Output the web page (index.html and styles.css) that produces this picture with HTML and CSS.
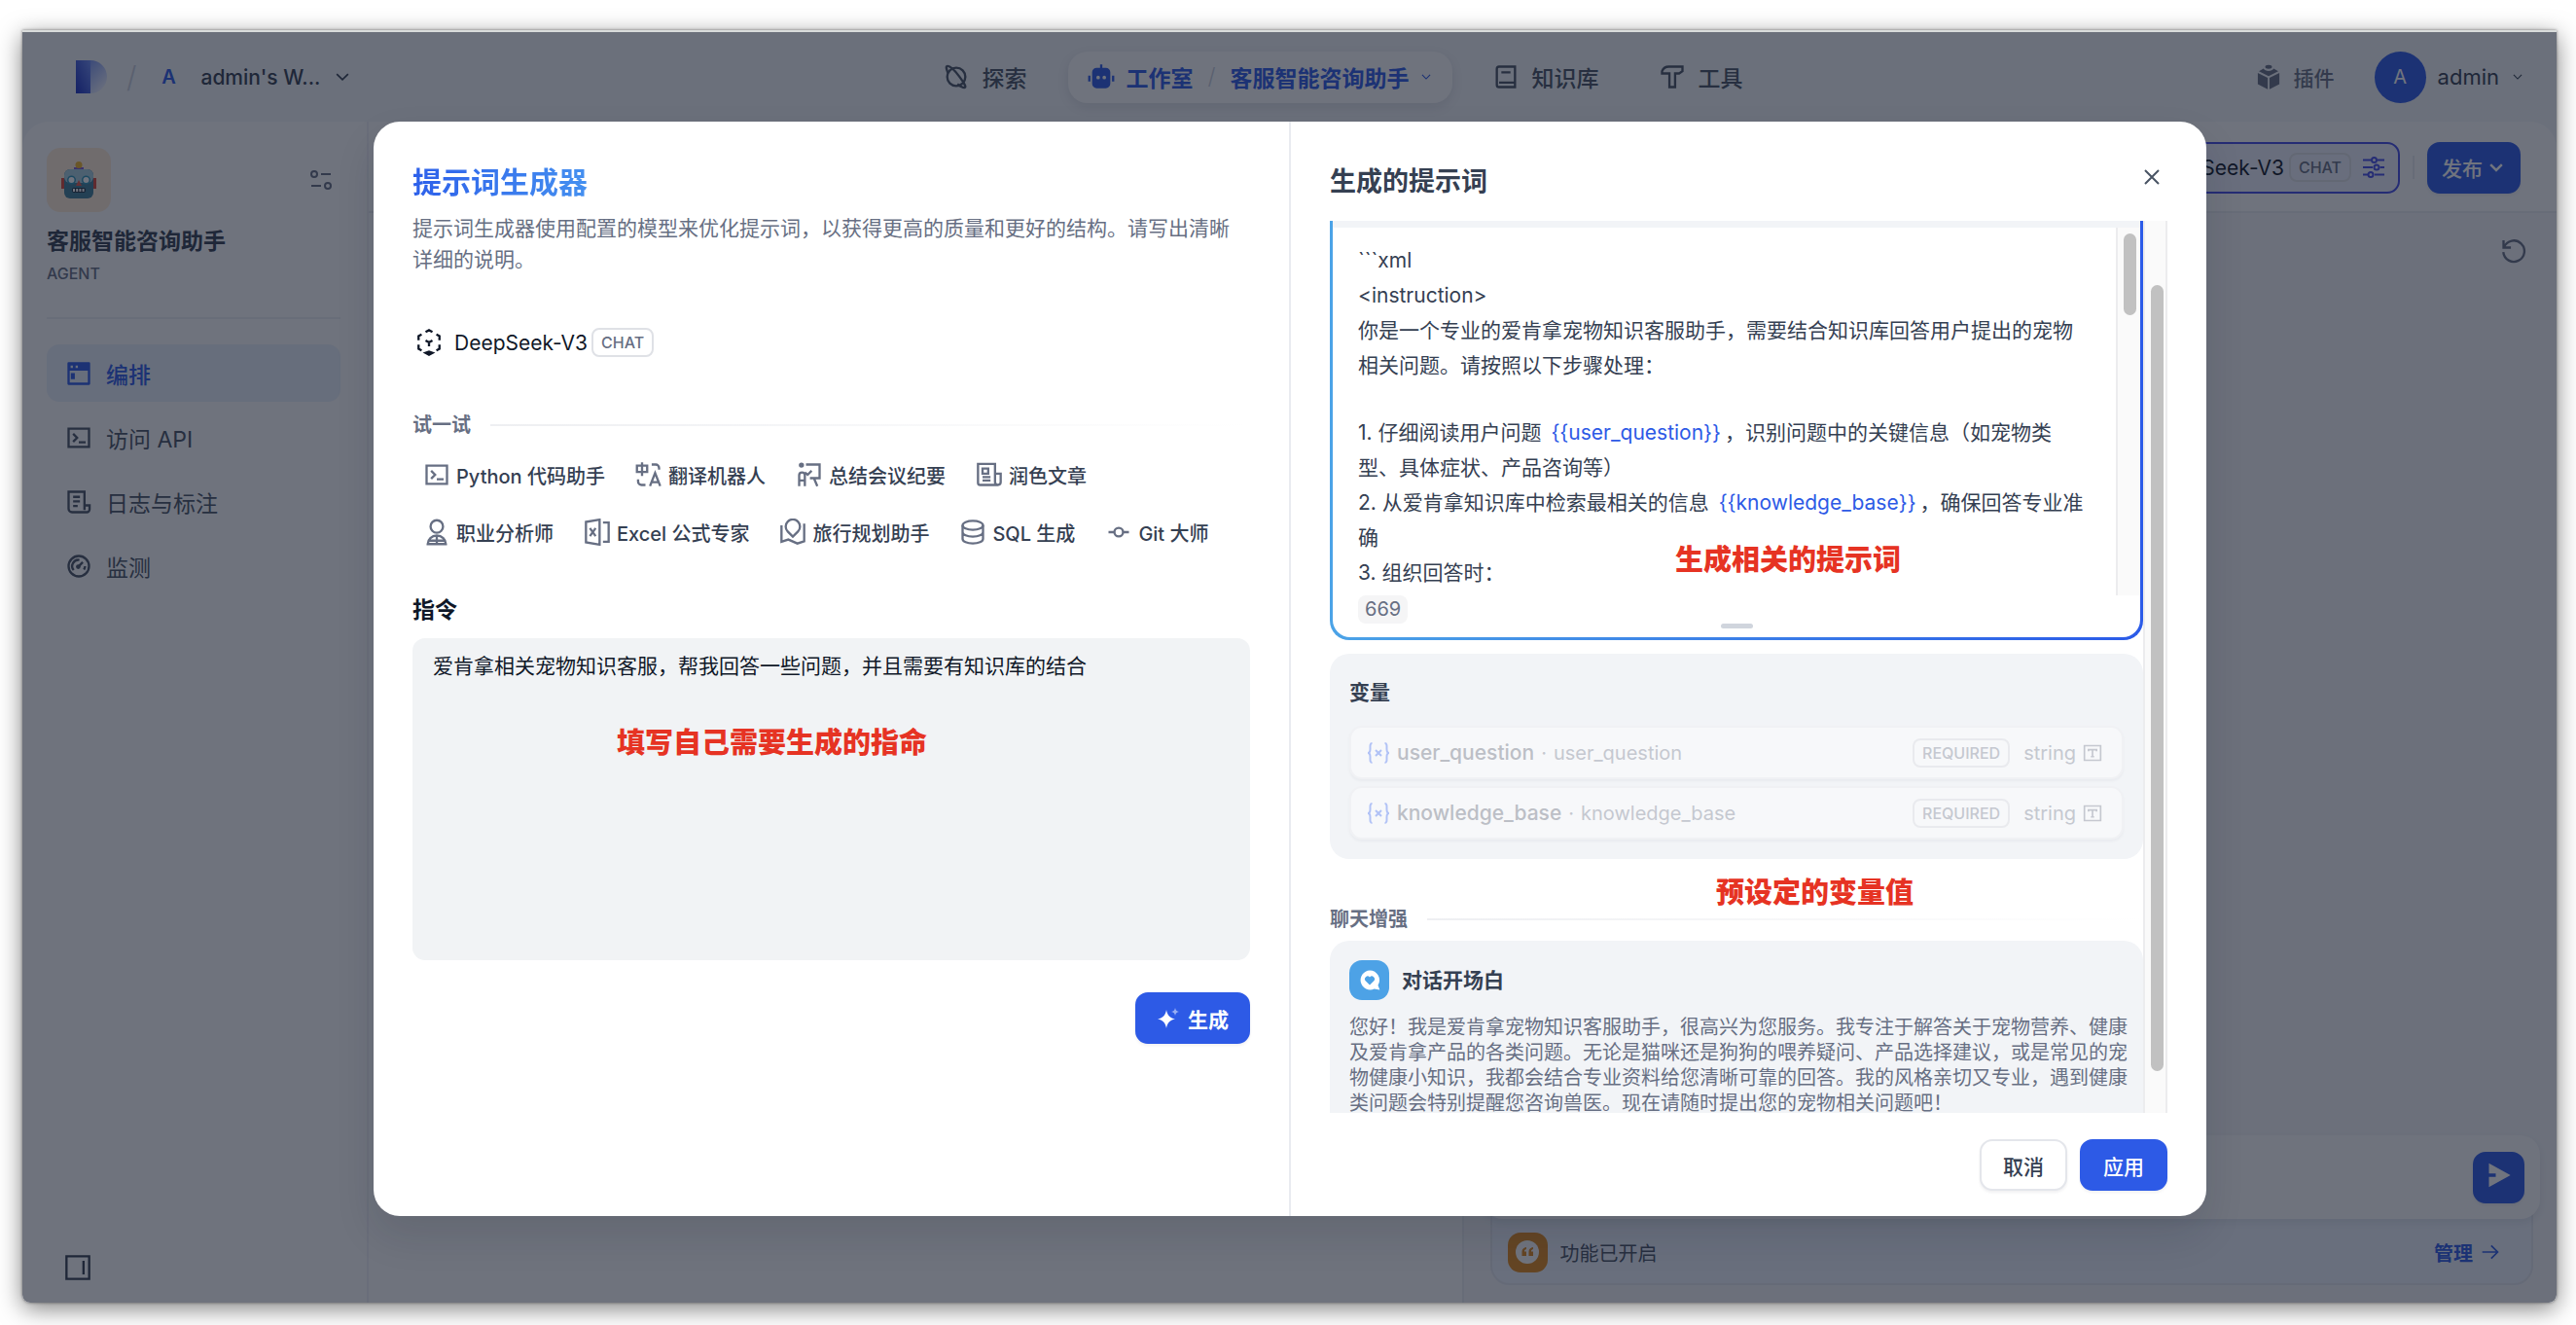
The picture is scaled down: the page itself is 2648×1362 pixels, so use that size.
FILE: index.html
```html
<!DOCTYPE html>
<html lang="zh-CN">
<head>
  <meta charset="UTF-8" />
  <meta name="viewport" content="width=device-width, initial-scale=1.0"/>
  <title>客服智能咨询助手</title>
  <link rel="stylesheet" href="styles.css">
</head>
<body>
  <svg class="sprite" aria-hidden="true">
    <symbol id="i-down" viewBox="0 0 24 24"><path d="M5 8.5l7 7 7-7"/></symbol>
    <symbol id="i-planet" viewBox="0 0 24 24"><circle cx="12" cy="12" r="8"/><path d="M4.6 8.4C3.2 5 2.8 2.8 3.9 2.6 6 2 10.500 6.200 14.500 11.500c4.100 5.500 6.500 9.300 5.100 9.900-1.400.5-4.200-1.200-6.600-3"/></symbol>
    <symbol id="i-robot" viewBox="0 0 24 24"><path class="solid" fill-rule="evenodd" d="M11 1h2v3h3a4 4 0 0 1 4 4v10a4 4 0 0 1-4 4H8a4 4 0 0 1-4-4V8a4 4 0 0 1 4-4h3zM9.300 11a1.600 1.600 0 1 0 0 3.200 1.600 1.600 0 0 0 0-3.200zm5.400 0a1.600 1.600 0 1 0 0 3.200 1.600 1.600 0 0 0 0-3.200zM.5 11h2v5h-2zm21 0h2v5h-2z"/></symbol>
    <symbol id="i-book" viewBox="0 0 24 24"><path d="M20 17V3H6a2 2 0 0 0-2 2v14a2 2 0 0 0 2 2h14v-4H6M8 8h8"/></symbol>
    <symbol id="i-hammer" viewBox="0 0 24 24"><path d="M21 3H9C6 3 4 4.500 3 7v2h6.500v12h5V9H18l3-2z"/></symbol>
    <symbol id="i-plugin" viewBox="0 0 24 24"><path class="solid" d="M12 1.500c2 0 3 .8 3 1.800s-1 1.700-3 1.700-3-.7-3-1.700 1-1.800 3-1.800zM2.500 8.500l8.700 4.300V23l-8.700-4.500zM21.500 8.500V18.500L12.800 23V12.800zM3.500 7l4-2.200c.8 1.300 2.400 2 4.500 2s3.700-.7 4.500-2l4 2.200L12 11.300z"/></symbol>
    <symbol id="i-toggle" viewBox="0 0 24 24"><circle cx="5" cy="6" r="3"/><circle cx="19" cy="18" r="3"/><path d="M12 6h10M2 18h10"/></symbol>
    <symbol id="i-window" viewBox="0 0 24 24"><path class="solid" fill-rule="evenodd" d="M3 2h18a1 1 0 0 1 1 1v18a1 1 0 0 1-1 1H3a1 1 0 0 1-1-1V3a1 1 0 0 1 1-1zM4 9.500V20h16V9.500zM4.800 5v2h2V5zm4.400 0v2h2V5zM5 11.500h3.500V17H5z"/></symbol>
    <symbol id="i-terminal" viewBox="0 0 24 24"><path d="M3 4h18v16H3zM7 8.500l3.500 3.500L7 15.500M12 16h6"/></symbol>
    <symbol id="i-log" viewBox="0 0 24 24"><path d="M17 15V3H3v15a3 3 0 0 0 3 3h13a2.500 2.500 0 0 0 2.500-2.500V15H17v4M7 7.500h6M7 11.500h6M7 15.500h4"/></symbol>
    <symbol id="i-gauge" viewBox="0 0 24 24"><circle cx="12" cy="12" r="9"/><path d="M11 13l4.500-4.500M7.500 15.500a5.500 5.500 0 0 1 5-9M16.500 15a5.500 5.500 0 0 0 1-3"/><circle class="solid" cx="11.500" cy="12.500" r="2"/></symbol>
    <symbol id="i-layout" viewBox="0 0 24 24"><path d="M2 2h20v20H2zM17 6v12"/></symbol>
    <symbol id="i-close" viewBox="0 0 24 24"><path d="M5 5l14 14M19 5L5 19"/></symbol>
    <symbol id="i-sliders" viewBox="0 0 24 24"><path d="M1 4.500h8M16 4.500h7M1 12h10M18.500 12H23M1 19.500h5M13 19.500h10"/><circle cx="12.500" cy="4.500" r="2.500"/><circle cx="15" cy="12" r="2.500"/><circle cx="9" cy="19.500" r="2.500"/></symbol>
    <symbol id="i-refresh" viewBox="0 0 24 24"><path d="M3 2.500V9h6.500M3.500 8.500A9.300 9.300 0 1 1 2.800 13"/></symbol>
    <symbol id="i-send" viewBox="0 0 24 24"><path class="solid" d="M3 1.500L22 12 3 22.500v-9h6v-3H3z"/></symbol>
    <symbol id="i-arrow" viewBox="0 0 24 24"><path d="M2 12h19M13 4l8 8-8 8"/></symbol>
    <symbol id="i-model" viewBox="0 0 24 24"><path d="M9 2.800L12 1.200l3 1.600M18.500 5l2.700 1.400V10M21.200 14v3.600L18.500 19M5.500 5L2.800 6.400V10M2.800 14v3.600L5.500 19M9 21.200l3 1.600 3-1.600-3-1zM9 10.200l3 1.800 3-1.800M12 12v3.500"/></symbol>
    <symbol id="i-translate" viewBox="0 0 24 24"><path d="M6 1v12M1.500 4h9v5.500h-9zM14.500 3H18a3 3 0 0 1 3 3v1.500M2.500 16v2a3 3 0 0 0 3 3H9M13 22l4.500-11.500L22 22M14.500 18.500h6"/></symbol>
    <symbol id="i-meeting" viewBox="0 0 24 24"><circle class="solid" cx="5" cy="3.500" r="2.300"/><path d="M9 3h12v12H12.500M3 22v-9.500a2.500 2.500 0 0 1 5 0V22M3 17h5M8 10l2.500 2L14 8.500M16 15l3 7"/></symbol>
    <symbol id="i-article" viewBox="0 0 24 24"><path d="M17 21H4a2 2 0 0 1-2-2V2.500h15V18.500a2.500 2.500 0 0 0 5 0V11h-5M17 21h3M6 6.500h5v4.500H6zM6 14h7M6 17h7"/></symbol>
    <symbol id="i-user" viewBox="0 0 24 24"><circle cx="12" cy="7" r="5.500"/><path d="M4 22.500a8 7.500 0 0 1 16 0zM12 15.500v7M4.500 19.500h15"/></symbol>
    <symbol id="i-excel" viewBox="0 0 24 24"><path d="M2 3l12-2v22L2 21zM17 3.500h5v17h-5M5.500 8.500l5 7M10.500 8.500l-5 7"/></symbol>
    <symbol id="i-map" viewBox="0 0 24 24"><path d="M12 16l-4.500-4.500a6.300 6.300 0 1 1 9 0zM2 6v14.500l6-2 8 3.500 6-2V4.500"/></symbol>
    <symbol id="i-database" viewBox="0 0 24 24"><ellipse cx="12" cy="6" rx="9" ry="4"/><path d="M3 6v12c0 2.200 4 4 9 4s9-1.800 9-4V6M3 12c0 2.200 4 4 9 4s9-1.800 9-4"/></symbol>
    <symbol id="i-commit" viewBox="0 0 24 24"><circle cx="12" cy="12" r="3.800"/><path d="M3 12h5M16 12h5"/></symbol>
    <symbol id="i-spark" viewBox="0 0 24 24"><path class="solid" d="M10 3c1 5.500 3 8 9 9.500-6 1.500-8 4-9 9.500-1-5.500-3-8-9-9.500 6-1.500 8-4 9-9.500z"/><path class="solid faint" d="M19 1c.5 2.500 1.500 3.500 4 4-2.500.5-3.500 1.500-4 4-.5-2.500-1.500-3.500-4-4 2.500-.5 3.500-1.500 4-4z"/></symbol>
    <symbol id="i-var" viewBox="0 0 24 24"><path d="M5.500 2C3 2 3.500 5 3.500 8 3.500 10 3 12 1 12c2 0 2.500 2 2.500 4 0 3-.5 6 2 6M18.500 2c2.500 0 2 3 2 6 0 2 .5 4 2.500 4-2 0-2.500 2-2.500 4 0 3 .5 6-2 6M9 9l6 6M15 9l-6 6"/></symbol>
    <symbol id="i-text" viewBox="0 0 24 24"><path d="M2 3h20v18H2zM7 10V8h10v2M12 8v8.500M10 16.500h4"/></symbol>
  </svg>

  <div class="window">
    <header class="header">
      <div class="workspace">
        <svg class="logo" viewBox="0 0 32 34" aria-hidden="true">
          <defs>
            <linearGradient id="logo-a" x1="0" y1="1" x2="1" y2="0"><stop offset="0" stop-color="#1a2fc0"/><stop offset="1" stop-color="#6e8cf5"/></linearGradient>
            <linearGradient id="logo-b" x1="0" y1="0" x2="1" y2="1"><stop offset="0" stop-color="#5578ee"/><stop offset="1" stop-color="#ffffff"/></linearGradient>
          </defs>
          <path fill="url(#logo-b)" d="M0 0h15a17 17 0 0 1 0 34z"/>
          <path fill="url(#logo-a)" d="M0 0h15v34H0z"/>
        </svg>
        <span class="slash">/</span>
        <span class="ws-badge">A</span>
        <button class="ws-name">admin's W... <svg class="icon sm"><use href="#i-down"/></svg></button>
      </div>
      <nav class="nav">
        <a href="#" class="nav-item"><svg class="icon"><use href="#i-planet"/></svg>探索</a>
        <div class="nav-pill">
          <a href="#"><svg class="icon lg"><use href="#i-robot"/></svg>工作室</a>
          <span class="slash">/</span>
          <a href="#">客服智能咨询助手 <svg class="icon xs"><use href="#i-down"/></svg></a>
        </div>
        <a href="#" class="nav-item"><svg class="icon"><use href="#i-book"/></svg>知识库</a>
        <a href="#" class="nav-item"><svg class="icon"><use href="#i-hammer"/></svg>工具</a>
      </nav>
      <div class="account">
        <a href="#" class="plugins"><svg class="icon"><use href="#i-plugin"/></svg>插件</a>
        <button class="user"><span class="avatar">A</span>admin <svg class="icon xs"><use href="#i-down"/></svg></button>
      </div>
    </header>

    <div class="main">
      <aside class="sidebar">
        <div class="app-head">
          <span class="app-icon">
            <svg viewBox="0 0 36 38" aria-hidden="true">
              <path fill="#7a5ad0" d="M13 6h10v4H13z"/><circle cx="18" cy="3.500" r="3.500" fill="#f0b429"/>
              <path fill="#d84a3a" d="M0 17h4v11H0zM32 17h4v11h-4z"/>
              <rect x="3" y="8" width="30" height="30" rx="6" fill="#3f7d97"/>
              <rect x="3" y="8" width="30" height="14" rx="6" fill="#a6cddb"/>
              <circle cx="10.500" cy="19" r="4.500" fill="#2f95b8"/><circle cx="25.500" cy="19" r="4.500" fill="#2f95b8"/>
              <circle cx="10.500" cy="19" r="3" fill="#fff"/><circle cx="25.500" cy="19" r="3" fill="#fff"/>
              <path fill="#e2574c" d="M18 19l3 6h-6z"/><rect x="11" y="27" width="14" height="5" rx="2" fill="#234"/>
              <path stroke="#fff" stroke-width="3" stroke-dasharray="2 1.200" d="M12 29.500h12"/>
            </svg>
          </span>
          <svg class="icon"><use href="#i-toggle"/></svg>
        </div>
        <div class="app-name">客服智能咨询助手</div>
        <div class="app-type">AGENT</div>
        <nav class="menu">
          <a href="#" class="menu-item active"><svg class="icon"><use href="#i-window"/></svg>编排</a>
          <a href="#" class="menu-item"><svg class="icon"><use href="#i-terminal"/></svg>访问 API</a>
          <a href="#" class="menu-item"><svg class="icon"><use href="#i-log"/></svg>日志与标注</a>
          <a href="#" class="menu-item"><svg class="icon"><use href="#i-gauge"/></svg>监测</a>
        </nav>
        <button class="collapse" aria-label="收起侧栏"><svg class="icon lg"><use href="#i-layout"/></svg></button>
      </aside>

      <section class="content">
        <div class="toolbar">
          <button class="model-btn">DeepSeek-V3 <span class="tag">CHAT</span><svg class="icon"><use href="#i-sliders"/></svg></button>
          <span class="toolbar-line"></span>
          <button class="btn primary publish">发布 <svg class="icon sm"><use href="#i-down"/></svg></button>
        </div>
        <div class="panes">
          <div class="pane"></div>
          <div class="pane preview">
            <button class="restart" aria-label="重新开始"><svg class="icon lg"><use href="#i-refresh"/></svg></button>
            <div class="chat-foot">
              <div class="chat-input">
                <button class="btn primary send" aria-label="发送"><svg class="icon lg"><use href="#i-send"/></svg></button>
              </div>
              <div class="features">
                <span class="feature-icon">
                  <svg viewBox="0 0 26 26" aria-hidden="true"><circle cx="13" cy="13" r="12" fill="#fff"/><path fill="#e08a1e" d="M12 8v2c-1.500.5-2 1-2 2.500h2V17H7.500v-4.500C7.500 10 9.500 8.300 12 8zm7 0v2c-1.500.5-2 1-2 2.500h2V17h-4.500v-4.500C14.500 10 16.500 8.300 19 8z"/></svg>
                </span>
                <span class="feature-text">功能已开启</span>
                <a href="#">管理 <svg class="icon sm"><use href="#i-arrow"/></svg></a>
              </div>
            </div>
          </div>
        </div>
      </section>
    </div>

    <div class="overlay">
      <div class="modal" role="dialog" aria-label="提示词生成器">
        <div class="left">
          <h1>提示词生成器</h1>
          <p class="desc">提示词生成器使用配置的模型来优化提示词，以获得更高的质量和更好的结构。请写出清晰<br>详细的说明。</p>
          <div class="model"><svg class="icon lg"><use href="#i-model"/></svg>DeepSeek-V3<span class="tag">CHAT</span></div>
          <div class="divider">试一试</div>
          <div class="chips">
            <button class="chip"><svg class="icon"><use href="#i-terminal"/></svg>Python 代码助手</button>
            <button class="chip"><svg class="icon"><use href="#i-translate"/></svg>翻译机器人</button>
            <button class="chip"><svg class="icon"><use href="#i-meeting"/></svg>总结会议纪要</button>
            <button class="chip"><svg class="icon"><use href="#i-article"/></svg>润色文章</button>
          </div>
          <div class="chips">
            <button class="chip"><svg class="icon"><use href="#i-user"/></svg>职业分析师</button>
            <button class="chip"><svg class="icon"><use href="#i-excel"/></svg>Excel 公式专家</button>
            <button class="chip"><svg class="icon"><use href="#i-map"/></svg>旅行规划助手</button>
            <button class="chip"><svg class="icon"><use href="#i-database"/></svg>SQL 生成</button>
            <button class="chip"><svg class="icon"><use href="#i-commit"/></svg>Git 大师</button>
          </div>
          <label class="label" for="instruction">指令</label>
          <textarea id="instruction">爱肯拿相关宠物知识客服，帮我回答一些问题，并且需要有知识库的结合</textarea>
          <button class="btn primary generate"><svg class="icon"><use href="#i-spark"/></svg>生成</button>
        </div>

        <div class="right">
          <div class="right-head">
            <h2>生成的提示词</h2>
            <button class="close" aria-label="关闭"><svg class="icon"><use href="#i-close"/></svg></button>
          </div>
          <div class="scroll">
            <div class="scroll-body">
              <div class="editor">
                <div class="editor-inner">
                  <div class="editor-row">
                    <div class="prompt">
                      <p>```xml</p>
                      <p>&lt;instruction&gt;</p>
                      <p>你是一个专业的爱肯拿宠物知识客服助手，需要结合知识库回答用户提出的宠物<br>相关问题。请按照以下步骤处理：</p>
                      <p class="blank"></p>
                      <p>1. 仔细阅读用户问题 <span class="var">{{user_question}}</span>，识别问题中的关键信息（如宠物类<br>型、具体症状、产品咨询等）</p>
                      <p>2. 从爱肯拿知识库中检索最相关的信息 <span class="var">{{knowledge_base}}</span>，确保回答专业准<br>确</p>
                      <p>3. 组织回答时：</p>
                    </div>
                    <div class="track"><div class="thumb short"></div></div>
                  </div>
                  <span class="count">669</span>
                  <span class="handle"></span>
                </div>
              </div>

              <div class="card variables">
                <h3>变量</h3>
                <div class="var-row">
                  <svg class="icon blue"><use href="#i-var"/></svg>
                  <span class="var-name">user_question</span><span class="dot">·</span><span class="var-desc">user_question</span>
                  <span class="tag">REQUIRED</span><span class="var-type">string</span><svg class="icon sm"><use href="#i-text"/></svg>
                </div>
                <div class="var-row">
                  <svg class="icon blue"><use href="#i-var"/></svg>
                  <span class="var-name">knowledge_base</span><span class="dot">·</span><span class="var-desc">knowledge_base</span>
                  <span class="tag">REQUIRED</span><span class="var-type">string</span><svg class="icon sm"><use href="#i-text"/></svg>
                </div>
              </div>

              <div class="divider chat-title">聊天增强</div>
              <div class="card opening">
                <div class="opening-head">
                  <span class="opening-icon">
                    <svg viewBox="0 0 24 24" aria-hidden="true"><path fill="#fff" d="M12 1.500a10 10 0 0 1 8.500 15.200l1.800 4.800-5.600-.9A10 10 0 1 1 12 1.500z"/><path fill="#4da2e6" d="M12 16.500l-4.300-4.300a2.800 2.800 0 0 1 4.300-3.700 2.800 2.800 0 0 1 4.300 3.700z"/></svg>
                  </span>
                  <h3>对话开场白</h3>
                </div>
                <p>您好！我是爱肯拿宠物知识客服助手，很高兴为您服务。我专注于解答关于宠物营养、健康<br>及爱肯拿产品的各类问题。无论是猫咪还是狗狗的喂养疑问、产品选择建议，或是常见的宠<br>物健康小知识，我都会结合专业资料给您清晰可靠的回答。我的风格亲切又专业，遇到健康<br>类问题会特别提醒您咨询兽医。现在请随时提出您的宠物相关问题吧！</p>
              </div>
            </div>
            <div class="track outer"><div class="thumb long"></div></div>
          </div>
          <div class="actions">
            <button class="btn">取消</button>
            <button class="btn primary">应用</button>
          </div>
        </div>

        <span class="note note-instruction">填写自己需要生成的指命</span>
        <span class="note note-prompt">生成相关的提示词</span>
        <span class="note note-variable">预设定的变量值</span>
      </div>
    </div>
  </div>
</body>
</html>
```
FILE: styles.css
```css
* {
  box-sizing: border-box;
}

body {
  margin: 0;
  height: 100vh;
  padding: 31px 20px 23px 23px;
  background-color: #fff;
  color: #354052;
  font-family: Inter, "Noto Sans CJK SC", sans-serif;
  font-size: 21px;
}

h1, h2, h3, p {
  margin: 0;
}

a {
  color: inherit;
  text-decoration: none;
}

button {
  font: inherit;
  color: inherit;
  background: none;
  border: none;
  padding: 0;
  cursor: pointer;
}

.sprite {
  position: absolute;
  width: 0;
  height: 0;
}

.icon {
  width: 24px;
  height: 24px;
  flex: none;
  fill: none;
  stroke: currentColor;
  stroke-width: 2;
}

.icon.xs {
  width: 14px;
  height: 14px;
}

.icon.sm {
  width: 20px;
  height: 20px;
}

.icon.lg {
  width: 28px;
  height: 28px;
}

.nav-item .icon,
.plugins .icon,
.menu-item .icon,
.chip .icon {
  width: 28px;
  height: 28px;
  margin: -2px;
}

.solid {
  fill: currentColor;
  stroke: none;
}

.faint {
  opacity: 0.5;
}

.window {
  position: relative;
  height: 100%;
  display: flex;
  flex-direction: column;
  border-top: 2px solid #d9dcdb;
  background-color: #f2f4f7;
  border-radius: 0 0 8px 8px;
  box-shadow: 0 0 3px rgba(0, 0, 0, 0.5), 0 6px 24px rgba(0, 0, 0, 0.5);
}

/* header */

.header {
  display: flex;
  align-items: center;
  height: 92px;
  flex: none;
  font-size: 23px;
}

.workspace {
  flex: 0 0 35.6%;
  display: flex;
  align-items: center;
  padding-left: 55px;
}

.logo {
  width: 32px;
  height: 34px;
}

.slash {
  color: #c8ceda;
  font-weight: 300;
}

.workspace .slash {
  margin-left: 20px;
  font-size: 30px;
}

.ws-badge {
  width: 40px;
  margin: 0 13px;
  text-align: center;
  font-size: 20px;
  font-weight: 600;
  color: #2d5ae6;
}

.ws-name {
  display: flex;
  align-items: center;
  gap: 13px;
  font-size: 21px;
  font-weight: 500;
}

.nav {
  display: flex;
  align-items: center;
  gap: 22px;
  font-weight: 500;
  color: #495464;
}

.nav a {
  display: flex;
  align-items: center;
  gap: 14px;
}

.nav .nav-item {
  padding: 0 21px;
}

.nav .nav-pill a {
  gap: 11px;
}

.nav-pill {
  display: flex;
  align-items: center;
  gap: 15px;
  height: 53px;
  padding: 0 20px;
  border-radius: 20px;
  background-color: #fcfcfd;
  color: #2d5ae6;
  font-weight: 600;
  box-shadow: 0 4px 12px rgba(16, 24, 40, 0.1);
}

.account {
  margin-left: auto;
  display: flex;
  align-items: center;
  gap: 41px;
  padding-right: 33px;
}

.plugins {
  display: flex;
  align-items: center;
  gap: 14px;
  font-size: 21px;
  font-weight: 500;
  color: #676f83;
}

.user {
  display: flex;
  align-items: center;
  gap: 12px;
  font-size: 22px;
}

.avatar {
  width: 53px;
  height: 53px;
  border-radius: 50%;
  background-color: #2d5ae6;
  color: #fff;
  font-size: 20px;
  line-height: 53px;
}

/* sidebar */

.main {
  flex: 1;
  min-height: 0;
  display: flex;
  border-radius: 27px 27px 8px 8px;
  background-color: #fcfcfd;
  overflow: hidden;
}

.sidebar {
  width: 356px;
  flex: none;
  display: flex;
  flex-direction: column;
  padding: 27px 27px 22px 25px;
  border-right: 2px solid #f0f1f5;
}

.app-head {
  display: flex;
  align-items: center;
  justify-content: space-between;
  color: #676f83;
}

.app-head .icon {
  margin-right: 8px;
}

.app-icon {
  display: flex;
  align-items: center;
  justify-content: center;
  width: 66px;
  height: 66px;
  border-radius: 14px;
  background-color: #ffead5;
}

.app-icon svg {
  width: 36px;
  height: 38px;
}

.app-name {
  margin-top: 13px;
  font-size: 23px;
  line-height: 34px;
  font-weight: 600;
}

.app-type {
  font-size: 16px;
  line-height: 32px;
  font-weight: 500;
  color: #676f83;
}

.menu {
  display: flex;
  flex-direction: column;
  gap: 7px;
  margin-top: 29px;
  padding-top: 26px;
  border-top: 2px solid #ecedf2;
}

.menu-item {
  display: flex;
  align-items: center;
  gap: 16px;
  height: 59px;
  padding-left: 21px;
  border-radius: 13px;
  font-size: 23px;
  color: #495464;
}

.menu-item.active {
  background-color: #e8f0f9;
  color: #2d5ae6;
  font-weight: 500;
}

.collapse {
  margin-top: auto;
  padding-left: 18px;
  text-align: left;
  line-height: 0;
}

/* app content */

.content {
  flex: 1;
  display: flex;
  flex-direction: column;
}

.toolbar {
  display: flex;
  align-items: center;
  justify-content: flex-end;
  gap: 13px;
  height: 94px;
  padding-top: 2px;
  padding-right: 37px;
  border-bottom: 2px solid #e9ebf0;
}

.model-btn {
  display: flex;
  align-items: center;
  gap: 5px;
  height: 53px;
  padding: 0 13px;
  border: 2px solid #444ce7;
  border-radius: 13px;
  background-color: #eef1fc;
  color: #101828;
}

.model-btn .icon {
  margin-left: 6px;
  color: #444ce7;
}

.toolbar-line {
  width: 2px;
  height: 24px;
  background-color: #e9ebf0;
}

.tag {
  height: 30px;
  padding: 0 8px;
  border: 2px solid #dfe1e6;
  border-radius: 8px;
  font-size: 16px;
  line-height: 26px;
  font-weight: 500;
  color: #676f83;
}

.btn {
  height: 53px;
  padding: 0 22px;
  border: 2px solid #e4e6eb;
  border-radius: 13px;
  font-weight: 500;
  color: #354052;
  background-color: #fff;
  box-shadow: 0 2px 3px rgba(16, 24, 40, 0.06);
}

.btn.primary {
  border-color: #2d5ae6;
  background-color: #2d5ae6;
  color: #fff;
}

.btn.publish {
  display: flex;
  align-items: center;
  gap: 4px;
  padding: 0 13px;
}

.publish .icon {
  stroke-width: 3;
}

.panes {
  flex: 1;
  display: flex;
}

.pane {
  flex: 1;
  display: flex;
  flex-direction: column;
}

.preview {
  background-color: #f4f5f8;
  border-left: 2px solid #e9ebf0;
}

.restart {
  margin: 25px 30px 0 auto;
  color: #676f83;
}

.chat-foot {
  margin-top: auto;
  padding: 0 17px 18px 20px;
}

.chat-input {
  position: relative;
  display: flex;
  align-items: center;
  justify-content: flex-end;
  height: 86px;
  padding-right: 16px;
  border-radius: 20px;
  background-color: #fcfcfd;
  box-shadow: 0 4px 8px rgba(16, 24, 40, 0.08);
}

.btn.send {
  width: 53px;
  padding: 0 10px;
}

.features {
  display: flex;
  align-items: center;
  gap: 13px;
  height: 88px;
  margin: -20px 7px 0;
  padding: 20px 32px 0 16px;
  border: 2px solid #e3e6ee;
  border-radius: 0 0 20px 20px;
  background-color: #eef3fc;
  font-size: 20px;
  color: #495464;
}

.feature-icon {
  display: flex;
  align-items: center;
  justify-content: center;
  width: 41px;
  height: 41px;
  border-radius: 13px;
  background-color: #e08a1e;
}

.feature-icon svg {
  width: 26px;
  height: 26px;
}

.features a {
  display: flex;
  align-items: center;
  gap: 8px;
  margin-left: auto;
  font-weight: 600;
  color: #2d5ae6;
}

/* modal */

.overlay {
  position: absolute;
  inset: 0;
  display: flex;
  padding: 92px 360px 89px 361px;
  border-radius: 0 0 8px 8px;
  background-color: rgba(16, 24, 40, 0.6);
}

.modal {
  position: relative;
  flex: 1;
  display: flex;
  border-radius: 27px;
  background-color: #fff;
  box-shadow: 0 20px 40px rgba(16, 24, 40, 0.12);
}

.left {
  flex: 1;
  min-width: 0;
  display: flex;
  flex-direction: column;
  padding: 40px;
  border-right: 2px solid #e9ebf0;
}

.right {
  flex: 1;
  min-width: 0;
  display: flex;
  flex-direction: column;
  padding: 40px 40px 26px;
}

h1 {
  align-self: flex-start;
  font-size: 30px;
  line-height: 44px;
  font-weight: 600;
  color: transparent;
  background: linear-gradient(90deg, #2d60ea, #4590f0);
  background-clip: text;
}

h2 {
  font-size: 27px;
  line-height: 44px;
  font-weight: 600;
}

h3 {
  font-size: 21px;
  line-height: 32px;
  font-weight: 600;
}

.desc {
  margin-top: 10px;
  line-height: 32px;
  color: #676f83;
}

.model {
  display: flex;
  align-items: center;
  gap: 4px;
  margin-top: 54px;
  color: #101828;
}

.model .icon {
  margin-left: 3px;
  margin-right: 8px;
}

.divider {
  display: flex;
  align-items: center;
  gap: 20px;
  font-size: 20px;
  line-height: 30px;
  font-weight: 600;
  color: #676f83;
}

.divider::after {
  content: "";
  flex: 1;
  height: 2px;
  background: linear-gradient(90deg, #eeeff2, #fff);
}

.left .divider {
  margin-top: 55px;
  margin-bottom: 10px;
}

.chips {
  display: flex;
  gap: 7px;
  margin-bottom: 7px;
}

.chip {
  display: flex;
  align-items: center;
  gap: 8px;
  height: 52px;
  padding: 0 13px;
  font-size: 20px;
  font-weight: 500;
}

.chip .icon {
  color: #676f83;
}

.label {
  margin-top: 32px;
  font-size: 23px;
  line-height: 30px;
  font-weight: 600;
  color: #101828;
}

textarea {
  height: 331px;
  margin: 14px 0 33px;
  padding: 13px 21px;
  border: none;
  border-radius: 13px;
  outline: none;
  resize: none;
  background-color: #f1f3f5;
  color: #101828;
  font: inherit;
  line-height: 32px;
}

.btn.generate {
  display: flex;
  align-items: center;
  gap: 8px;
  align-self: flex-end;
  padding: 0 20px;
  font-weight: 600;
}

.right-head {
  display: flex;
  align-items: flex-start;
  justify-content: space-between;
  margin-bottom: 18px;
}

.close {
  padding: 5px 4px;
  line-height: 0;
  color: #495464;
}

.scroll {
  flex: 1;
  min-height: 0;
  display: flex;
}

.scroll-body {
  flex: 1;
  min-width: 0;
  overflow: hidden;
}

.track {
  flex: none;
  width: 25px;
  padding: 6px;
  border-left: 2px solid #ececee;
  background-color: #fafafa;
}

.track.outer {
  border-right: 2px solid #ececee;
  padding: 66px 5px 0 6px;
}

.thumb {
  width: 13px;
  border-radius: 7px;
  background-color: #c1c1c1;
}

.thumb.short {
  height: 84px;
}

.thumb.long {
  height: 808px;
}

.editor {
  padding: 0 3px 3px;
  border-radius: 0 0 20px 20px;
  background: linear-gradient(90deg, #4ba3e7, #2b5be8);
}

.editor-inner {
  position: relative;
  height: 428px;
  border-top: 7px solid #f2f4f7;
  border-radius: 0 0 18px 18px;
  background-color: #fff;
}

.editor-row {
  display: flex;
  height: 378px;
}

.prompt {
  flex: 1;
  padding: 16px 0 0 26px;
  line-height: 36px;
}

.prompt .blank {
  height: 33px;
}

.var {
  margin: 0 4px;
  color: #2d5ae6;
}

.count {
  display: inline-block;
  margin-left: 26px;
  padding: 0 7px;
  border-radius: 8px;
  background-color: #f5f5f6;
  font-size: 20px;
  line-height: 29px;
  color: #676f83;
}

.handle {
  position: absolute;
  left: 50%;
  bottom: 9px;
  width: 33px;
  height: 5px;
  margin-left: -16px;
  border-radius: 3px;
  background-color: #d0d5dd;
}

.card {
  padding: 20px;
  border-radius: 20px;
  background-color: #f2f4f7;
}

.variables {
  height: 211px;
  margin-top: 14px;
  padding-top: 24px;
}

.var-row {
  display: flex;
  align-items: center;
  gap: 7px;
  height: 55px;
  margin-top: 7px;
  padding: 0 20px 0 16px;
  border: 2px solid #f0f1f4;
  border-radius: 13px;
  background-color: #f7f8fa;
  box-shadow: 0 2px 3px rgba(16, 24, 40, 0.04);
  color: #c5c8d0;
  font-size: 20px;
}

h3 + .var-row {
  margin-top: 18px;
}

.var-name {
  font-size: 21px;
  font-weight: 500;
  color: #bcbfc6;
}

.var-row .blue {
  color: #b1c2f6;
}

.var-row .tag {
  margin-left: auto;
  margin-right: 7px;
  border-color: #e9eaee;
  color: #c5c8d0;
}

.chat-title {
  margin: 47px 0 7px;
}

.opening-head {
  display: flex;
  align-items: center;
  gap: 13px;
  margin-bottom: 15px;
}

.opening-icon {
  display: flex;
  align-items: center;
  justify-content: center;
  width: 41px;
  height: 41px;
  border-radius: 13px;
  background-color: #4da2e6;
}

.opening-icon svg {
  width: 24px;
  height: 24px;
}

.opening p {
  font-size: 20px;
  line-height: 26px;
  color: #676f83;
  white-space: nowrap;
}

.actions {
  display: flex;
  justify-content: flex-end;
  gap: 13px;
  margin-top: 27px;
}

/* red notes lying over the dialog */

.note {
  position: absolute;
  font-size: 29px;
  line-height: 40px;
  font-weight: 900;
  color: #e63323;
}

.note-instruction {
  left: 250px;
  top: 619px;
}

.note-prompt {
  left: 1338px;
  top: 431px;
}

.note-variable {
  left: 1380px;
  top: 773px;
}
```
